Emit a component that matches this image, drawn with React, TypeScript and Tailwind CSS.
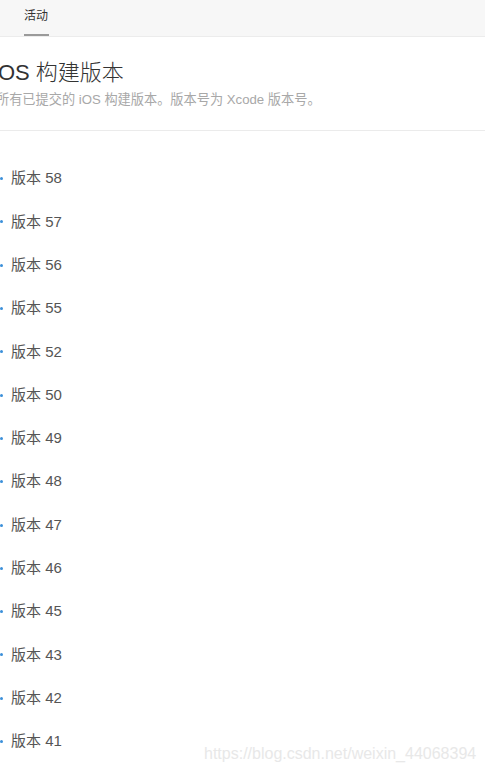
import React from 'react';

const builds = [58, 57, 56, 55, 52, 50, 49, 48, 47, 46, 45, 43, 42, 41];

export default function App() {
  return (
    <div
      className="relative w-[485px] h-[772px] overflow-hidden bg-white"
      style={{ fontFamily: '"Helvetica Neue", "Liberation Sans", "Noto Sans CJK SC", sans-serif' }}
    >
      {/* Tabs */}
      <div className="h-[37px] bg-[#f7f7f7] border-b border-[#ececec] flex">
        <div className="ml-[24px] flex flex-col justify-between">
          <span className="pt-[8px] text-[12px] leading-[16px] text-[#333]">活动</span>
          <span className="h-[2px] w-[25px] bg-[#9a9a9a]" />
        </div>
      </div>

      {/* Heading */}
      <div className="pt-[22px] pb-[22px] border-b border-[#ebebeb]">
        <h1 className="-ml-[7px] text-[22px] leading-[27px] font-light text-[#333]">iOS 构建版本</h1>
        <p className="-ml-[4px] mt-[5px] text-[13.2px] leading-[17px] text-[#a8a8a8]">
          所有已提交的 iOS 构建版本。版本号为 Xcode 版本号。
        </p>
      </div>

      {/* Build list */}
      <ul className="pt-[26px]">
        {builds.map((b) => (
          <li key={b} className="h-[43.3px] flex items-center">
            <span className="w-[3px] h-[3px] rounded-full bg-[#3b8fd9]" />
            <span className="ml-[8px] text-[15px] text-[#555]">版本 {b}</span>
          </li>
        ))}
      </ul>

      {/* Watermark */}
      <div className="absolute left-[204px] top-[742px] text-[16px] text-[#e8e8e8]">
        https://blog.csdn.net/weixin_44068394
      </div>
    </div>
  );
}
